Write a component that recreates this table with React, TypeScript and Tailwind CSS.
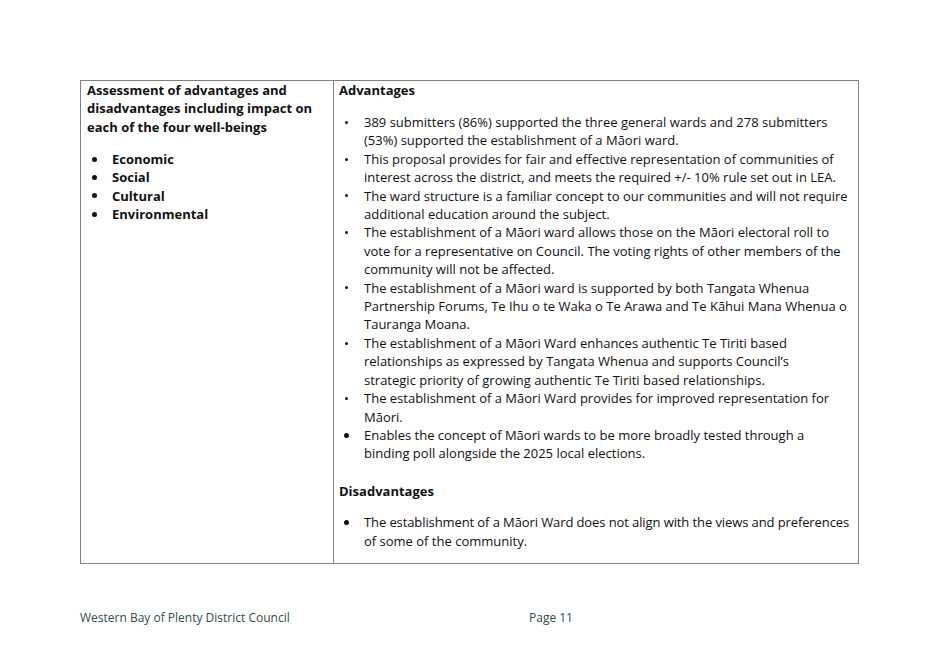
export default function App() {
  const font = { fontFamily: '"Open Sans", "DejaVu Sans", sans-serif' };

  const Dot = ({ big }: { big?: boolean }) => (
    <span className="w-[25px] shrink-0 flex items-center h-[18.4px] pl-[5px]">
      <span
        className={
          big
            ? "block w-[5px] h-[5px] rounded-full bg-[#111]"
            : "block w-[3px] h-[3px] rounded-full bg-[#111] ml-[1px]"
        }
      />
    </span>
  );

  const Item = ({ lines, big, tight }: { lines: string[]; big?: boolean; tight?: boolean }) => (
    <li className="flex">
      <Dot big={big} />
      <div>
        {lines.map((l, i) => (
          <div
            key={i}
            className={tight && i === 0 ? "whitespace-nowrap tracking-[-0.1px]" : "whitespace-nowrap"}
          >
            {l}
          </div>
        ))}
      </div>
    </li>
  );

  const advantages: { lines: string[]; big?: boolean }[] = [
    {
      lines: [
        "389 submitters (86%) supported the three general wards and 278 submitters",
        "(53%) supported the establishment of a Māori ward.",
      ],
    },
    {
      lines: [
        "This proposal provides for fair and effective representation of communities of",
        "interest across the district, and meets the required +/- 10% rule set out in LEA.",
      ],
    },
    {
      lines: [
        "The ward structure is a familiar concept to our communities and will not require",
        "additional education around the subject.",
      ],
    },
    {
      lines: [
        "The establishment of a Māori ward allows those on the Māori electoral roll to",
        "vote for a representative on Council.  The voting rights of other members of the",
        "community will not be affected.",
      ],
    },
    {
      lines: [
        "The establishment of a Māori ward is supported by both Tangata Whenua",
        "Partnership Forums, Te Ihu o te Waka o Te Arawa and Te Kāhui Mana Whenua o",
        "Tauranga Moana.",
      ],
    },
    {
      lines: [
        "The establishment of a Māori Ward enhances authentic Te Tiriti based",
        "relationships as expressed by Tangata Whenua and supports Council’s",
        "strategic priority of growing authentic Te Tiriti based relationships.",
      ],
    },
    {
      lines: [
        "The establishment of a Māori Ward provides for improved representation for",
        "Māori.",
      ],
    },
    {
      lines: [
        "Enables the concept of Māori wards to be more broadly tested through a",
        "binding poll alongside the 2025 local elections.",
      ],
      big: true,
    },
  ];

  return (
    <div
      className="w-[939px] h-[664px] bg-white text-[#111] text-[13px] leading-[18.4px] pt-[80px] pl-[80px]"
      style={font}
    >
      <div className="w-[779px] h-[484px] grid grid-cols-[253px_1fr] border border-[#808080]">
        <div className="border-r border-[#808080] pl-[6px]">
          <div className="font-bold whitespace-nowrap">
            <div>Assessment of advantages and</div>
            <div>disadvantages including impact on</div>
            <div>each of the four well-beings</div>
          </div>
          <ul className="mt-[13.6px] font-bold">
            {["Economic", "Social", "Cultural", "Environmental"].map((t) => (
              <Item key={t} lines={[t]} big />
            ))}
          </ul>
        </div>
        <div className="pl-[5px]">
          <div className="font-bold">Advantages</div>
          <ul className="mt-[13.6px]">
            {advantages.map((a, i) => (
              <Item key={i} lines={a.lines} big={a.big} />
            ))}
          </ul>
          <div className="font-bold mt-[19.6px]">Disadvantages</div>
          <ul className="mt-[12.6px]">
            <Item
              big
              tight
              lines={[
                "The establishment of a Māori Ward does not align with the views and preferences",
                "of some of the community.",
              ]}
            />
          </ul>
        </div>
      </div>
      <div className="flex mt-[45px] text-[12px] text-[#2f4f43]">
        <div className="w-[449px]">Western Bay of Plenty District Council</div>
        <div>Page 11</div>
      </div>
    </div>
  );
}
